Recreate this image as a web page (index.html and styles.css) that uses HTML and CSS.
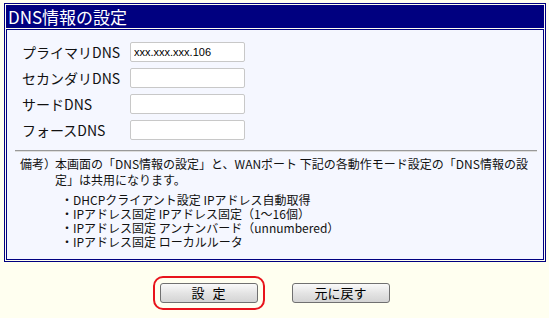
FILE: index.html
```html
<!DOCTYPE html>
<html lang="ja">
<head>
    <meta charset="UTF-8">
    <title>DNS情報の設定</title>
    <link rel="stylesheet" href="styles.css">
</head>
<body>
<div class="frame">
    <div class="head">DNS情報の設定</div>
    <div class="panel">
        <div class="rows">
            <div class="row">
                <span class="lbl">プライマリDNS</span>
                <input class="ipt" type="text" value="xxx.xxx.xxx.106">
            </div>
            <div class="row">
                <span class="lbl">セカンダリDNS</span>
                <input class="ipt" type="text">
            </div>
            <div class="row">
                <span class="lbl">サードDNS</span>
                <input class="ipt" type="text">
            </div>
            <div class="row">
                <span class="lbl">フォースDNS</span>
                <input class="ipt" type="text">
            </div>
        </div>

        <hr class="sep">

        <div class="note">
            <span class="note-h">備考）</span>
            <div class="note-body">
                <p class="note-txt">本画面の「DNS情報の設定」と、WANポート 下記の各動作モード設定の「DNS情報の設<br>定」は共用になります。</p>
                <ul class="modes">
                    <li>・DHCPクライアント設定 IPアドレス自動取得</li>
                    <li>・IPアドレス固定 IPアドレス固定（1〜16個）</li>
                    <li>・IPアドレス固定 アンナンバード（unnumbered）</li>
                    <li>・IPアドレス固定 ローカルルータ</li>
                </ul>
            </div>
        </div>
    </div>
</div>

<div class="btns">
    <button class="btn btn-on" type="button">設 定</button>
    <button class="btn" type="button">元に戻す</button>
</div>
</body>
</html>
```

FILE: styles.css
```css
body {
    margin: 0;
    background-color: #fffff0;
    font-family: "Noto Sans CJK JP", "Noto Sans", sans-serif;
    color: #000;
}

.frame {
    box-sizing: border-box;
    width: 542px;
    margin: 3px 0 0 4px;
    border: 1px solid #000080;
    padding: 1px;
}

.head {
    height: 23px;
    line-height: 23px;
    padding-left: 2px;
    background-color: #000080;
    color: #fff;
    font-size: 17px;
}

.panel {
    margin-top: 1px;
    border: 1px solid #000080;
    background-color: #f5f7ff;
    padding: 12px 0 10px 0;
}

.rows {
    padding-left: 15px;
}

.row {
    display: flex;
    align-items: center;
    height: 20px;
    margin-bottom: 6px;
}

.row:last-child {
    margin-bottom: 0;
}

.lbl {
    width: 108px;
    font-size: 14px;
    line-height: 20px;
    color: #111;
}

.ipt {
    box-sizing: border-box;
    width: 115px;
    height: 20px;
    border: 1px solid #c8c8c8;
    border-radius: 2px;
    background-color: #fff;
    padding: 0 3px;
    font-family: "Liberation Sans", sans-serif;
    font-size: 11px;
    color: #000;
}

.sep {
    margin: 10px 6px 4px 8px;
    border: 0;
    border-top: 1px solid #999;
    border-bottom: 1px solid #ddd;
    height: 0;
}

.note {
    display: flex;
    padding-left: 13px;
    font-size: 12px;
    color: #111;
}

.note-h {
    flex: none;
    width: 35px;
    line-height: 16px;
}

.note-txt {
    margin: 0;
    line-height: 16px;
}

.modes {
    list-style: none;
    margin: 5px 0 0 6px;
    padding: 0;
    line-height: 14px;
}

.btns {
    display: flex;
    justify-content: center;
    gap: 34px;
    margin-top: 21px;
    padding-bottom: 12px;
}

.btn {
    box-sizing: border-box;
    width: 98px;
    height: 20px;
    padding: 0;
    border: 1px solid #707070;
    border-radius: 3px;
    background: linear-gradient(#fafafa, #e4e4e4 50%, #d4d4d4);
    font-family: "Noto Sans CJK JP", sans-serif;
    font-size: 13px;
    line-height: 18px;
    word-spacing: 5px;
    color: #000;
}

.btn-on {
    outline: 2px solid #e8141c;
    outline-offset: 5px;
}
```
